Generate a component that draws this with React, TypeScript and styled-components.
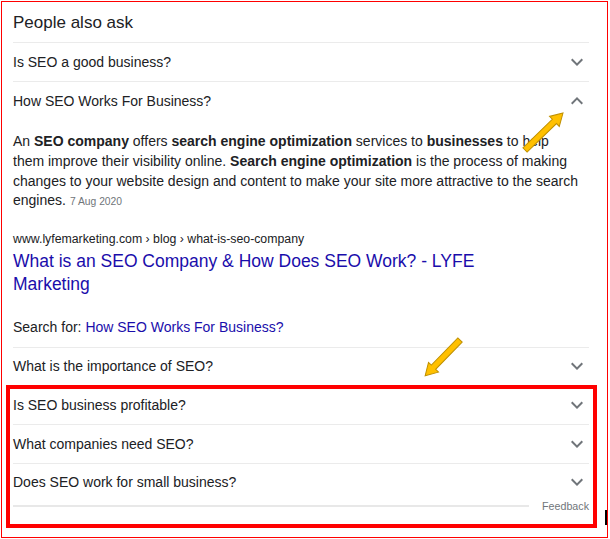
import React from 'react';
import styled, { createGlobalStyle } from 'styled-components';

const GlobalStyle = createGlobalStyle`
  html, body {
    margin: 0;
    padding: 0;
    background: #fff;
  }
  body {
    font-family: "Liberation Sans", Arial, sans-serif;
    color: #202124;
  }
`;

const Page = styled.div`
  position: relative;
  width: 610px;
  height: 539px;
  overflow: hidden;
`;

const Frame = styled.div`
  margin: 1px 0 0 1px;
  width: 607px;
  height: 537px;
  box-sizing: border-box;
  border: 1px solid #ff0000;
  padding: 0 18px 0 11px;
`;

const Heading = styled.div`
  height: 40px;
  padding-top: 1px;
  box-sizing: border-box;
  display: flex;
  align-items: center;
  font-size: 17px;
  color: #202124;
`;

const Row = styled.div`
  height: 38.7px;
  box-sizing: border-box;
  border-top: 1px solid #ebebeb;
  display: flex;
  align-items: center;
  justify-content: space-between;
  font-size: 14px;
  color: #202124;
`;

const Chevron = styled.svg`
  width: 24px;
  height: 24px;
  fill: #70757a;
  flex: none;
`;

const Answer = styled.div`
  padding: 13px 0 9.8px;
`;

const Snippet = styled.p`
  margin: 0;
  max-width: 570px;
  font-size: 14px;
  line-height: 19.6px;
  color: #202124;

  b {
    font-weight: bold;
  }
`;

const Date = styled.span`
  margin-left: 4px;
  font-size: 10.3px;
  color: #70757a;
`;

const Crumbs = styled.div`
  margin-top: 18px;
  font-size: 12.3px;
  line-height: 18px;
  color: #202124;
`;

const ResultTitle = styled.a`
  display: block;
  max-width: 500px;
  margin-top: 2.5px;
  font-size: 17.5px;
  line-height: 23px;
  color: #1a0dab;
  text-decoration: none;
`;

const SearchFor = styled.div`
  margin-top: 20.5px;
  font-size: 14px;
  line-height: 20px;
  color: #202124;

  a {
    color: #1a0dab;
    text-decoration: none;
  }
`;

const Footer = styled.div`
  height: 10px;
  display: flex;
  align-items: center;
`;

const FooterRule = styled.div`
  flex: 1;
  height: 2px;
  background: #e8e8e8;
`;

const Feedback = styled.span`
  margin-left: 13px;
  font-size: 10.7px;
  color: #70757a;
`;

const Highlight = styled.div`
  position: absolute;
  left: 6px;
  top: 385px;
  width: 591px;
  height: 143px;
  box-sizing: border-box;
  border: 4px solid #ff0000;
  pointer-events: none;
`;

const Overlay = styled.svg`
  position: absolute;
  left: 0;
  top: 0;
  width: 610px;
  height: 539px;
  pointer-events: none;
`;

const Tick = styled.div`
  position: absolute;
  left: 605px;
  top: 510px;
  width: 2px;
  height: 15px;
  background: #000;
`;

const DOWN = 'M16.59 8.59L12 13.17 7.41 8.59 6 10l6 6 6-6z';
const UP = 'M12 8l-6 6 1.41 1.41L12 10.83l4.59 4.58L18 14z';

function Question({ text, open = false }: { text: string; open?: boolean }) {
  return (
    <Row>
      <span>{text}</span>
      <Chevron viewBox="0 0 24 24">
        <path d={open ? UP : DOWN} />
      </Chevron>
    </Row>
  );
}

// yellow callout arrow, drawn from its tail towards the tip
function Arrow({ x, y, angle, length }: { x: number; y: number; angle: number; length: number }) {
  const h = length - 12;
  const pts = `0,-3 ${h},-3 ${h},-7 ${length},0 ${h},7 ${h},3 0,3`;
  return (
    <polygon
      points={pts}
      transform={`translate(${x} ${y}) rotate(${angle})`}
      fill="#ffc000"
      stroke="#bf9000"
      strokeWidth={1}
      strokeLinejoin="miter"
    />
  );
}

export default function App() {
  const lower = [
    'Is SEO business profitable?',
    'What companies need SEO?',
    'Does SEO work for small business?',
  ];

  return (
    <Page>
      <GlobalStyle />
      <Frame>
        <Heading>People also ask</Heading>
        <Question text="Is SEO a good business?" />
        <Question text="How SEO Works For Business?" open />
        <Answer>
          <Snippet>
            An <b>SEO company</b> offers <b>search engine optimization</b> services to{' '}
            <b>businesses</b> to help them improve their visibility online.{' '}
            <b>Search engine optimization</b> is the process of making changes to your website
            design and content to make your site more attractive to the search engines.
            <Date>7 Aug 2020</Date>
          </Snippet>
          <Crumbs>www.lyfemarketing.com › blog › what-is-seo-company</Crumbs>
          <ResultTitle href="#">What is an SEO Company &amp; How Does SEO Work? - LYFE Marketing</ResultTitle>
          <SearchFor>
            Search for: <a href="#">How SEO Works For Business?</a>
          </SearchFor>
        </Answer>
        <Question text="What is the importance of SEO?" />
        {lower.map((q) => (
          <Question key={q} text={q} />
        ))}
        <Footer>
          <FooterRule />
          <Feedback>Feedback</Feedback>
        </Footer>
      </Frame>
      <Highlight />
      <Overlay viewBox="0 0 610 539">
        <Arrow x={525} y={150} angle={-44.2} length={53} />
        <Arrow x={460} y={340} angle={134.2} length={50} />
      </Overlay>
      <Tick />
    </Page>
  );
}
